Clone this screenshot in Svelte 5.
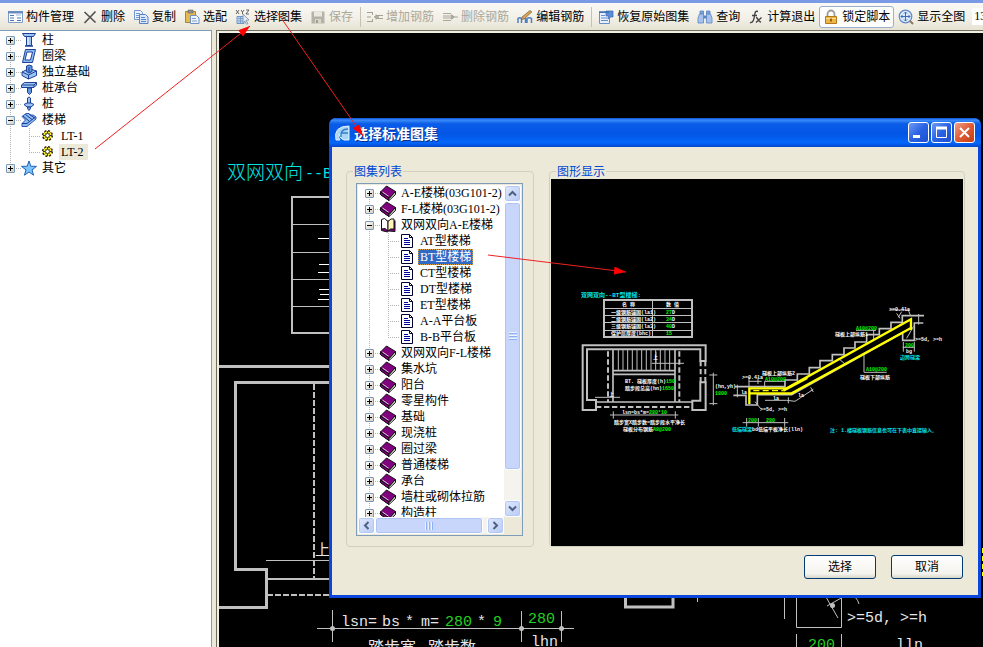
<script>
    const tools = [
        { icon: 'manage', label: '构件管理' },
        { icon: 'cross', label: '删除' },
        { icon: 'copy', label: '复制' },
        { icon: 'paste', label: '选配' },
        { icon: 'pick', label: '选择图集' },
        { icon: 'save', label: '保存', disabled: true },
        { sep: true },
        { icon: 'barAdd', label: '增加钢筋', disabled: true },
        { icon: 'barDel', label: '删除钢筋', disabled: true },
        { icon: 'barEdit', label: '编辑钢筋' },
        { sep: true },
        { icon: 'restore', label: '恢复原始图集' },
        { icon: 'find', label: '查询' },
        { icon: 'fx', label: '计算退出' },
        { icon: 'lock', label: '锁定脚本', pressed: true },
        { icon: 'fit', label: '显示全图' },
    ];

    const parts = [
        { icon: 'column', label: '柱', sign: '+' },
        { icon: 'ring', label: '圈梁', sign: '+' },
        { icon: 'footing', label: '独立基础', sign: '+' },
        { icon: 'cap', label: '桩承台', sign: '+' },
        { icon: 'pile', label: '桩', sign: '+' },
        { icon: 'stair', label: '楼梯', sign: '-' },
        { icon: 'gear', label: 'LT-1', child: true },
        { icon: 'gear', label: 'LT-2', child: true, last: true, mark: 'soft' },
        { icon: 'star', label: '其它', sign: '+', end: true },
    ];

    const atlas = [
        { icon: 'book', label: 'A-E楼梯(03G101-2)', sign: '+' },
        { icon: 'book', label: 'F-L楼梯(03G101-2)', sign: '+' },
        { icon: 'open', label: '双网双向A-E楼梯', sign: '-' },
        { icon: 'page', label: 'AT型楼梯', child: true },
        { icon: 'page', label: 'BT型楼梯', child: true, mark: 'strong' },
        { icon: 'page', label: 'CT型楼梯', child: true },
        { icon: 'page', label: 'DT型楼梯', child: true },
        { icon: 'page', label: 'ET型楼梯', child: true },
        { icon: 'page', label: 'A-A平台板', child: true },
        { icon: 'page', label: 'B-B平台板', child: true, last: true },
        ...['双网双向F-L楼梯', '集水坑', '阳台', '零星构件', '基础', '现浇桩', '圈过梁', '普通楼梯', '承台', '墙柱或砌体拉筋', '构造柱']
            .map((label) => ({ icon: 'book', label, sign: '+' })),
    ];

    const icons = {
        manage: '<path d="M1.500 2.500h14v11h-14z" fill="#fff" stroke="#7e9cc4"/><path d="M1 2h15v2.500H1z" fill="#6a8cc0"/><path d="M3 6.500h4M3 9h4M3 11.500h4M10 9h4M10 11.500h4" stroke="#4f7ab8" stroke-width="1.200"/><path d="M9 6h5" stroke="#9db7d8"/>',
        cross: '<path d="M2.500 3l11 10.500M13.500 2.500L2.500 14" stroke="#555" stroke-width="1.700" fill="none"/>',
        copy: '<path d="M1.500 1.500h6l2 2v7h-8z" fill="#eaf2fd" stroke="#7297cf"/><path d="M3 4.500h4M3 6.500h4M3 8.500h3" stroke="#7297cf"/><path d="M6.500 5.500h6l2.500 2.500v6.500H6.500z" fill="#dbe8fb" stroke="#5b83c4"/><path d="M8 8.500h4M8 10.500h5M8 12.500h5" stroke="#5b83c4"/>',
        paste: '<path d="M1.500 2.500h10v11h-10z" fill="#e6b94e" stroke="#a8853a"/><path d="M4 1h5v3H4z" fill="#8f8f8f" stroke="#666" stroke-width=".6"/><path d="M6.500 6.500h6l2.500 2.500v5.500H6.500z" fill="#eef4fd" stroke="#6f8fc0"/><path d="M8 9.500h4M8 12h5" stroke="#7d9fd0"/>',
        pick: '<path d="M1 1l3 4M4 1L1 5M6 1l1.500 2L9 1M7.500 3v2M11 1h3l-3 4h3" stroke="#555" stroke-width=".9" fill="none"/><path d="M2 7.500h7v7H2z" fill="#bdd4f0" stroke="#6f94c4"/><path d="M3 9.500h5M3 12h5M5.500 8v6" stroke="#6f94c4" stroke-width=".8"/><path d="M8 5l6 6-3 .3 2 3.200-1.500.8-1.800-3.300L8 14z" fill="#dfe8f5" stroke="#7b8fa8" stroke-width=".8"/>',
        save: '<path d="M1.500 2.500h13v12h-13z" fill="#b5b3a8"/><path d="M4 2.500h8v5H4z" fill="#ebe9df"/><path d="M5 10h6v4.500H5z" fill="#d8d6cb"/><path d="M6 11h2v3H6z" fill="#a19f94"/>',
        barAdd: '<path d="M0 3.500h5.500M0 12.500h5.500M5.500 3v3M5.500 10v3M0 8h4M9 6.500h7M9 9.500h7" stroke="#a3a194" fill="none"/><path d="M7 8h5" stroke="#a3a194" stroke-width="1.500"/><path d="M9 5.500v5" stroke="#a3a194"/>',
        barDel: '<path d="M1 4.500h8M1 11.500h8M1 7h10M1 9h10M11 8h5" stroke="#aaa89b" fill="none"/><path d="M9 5v6l4-3z" fill="#aaa89b"/>',
        barEdit: '<path d="M1 14V9.500q1.500-1.500 3.500 0V14M4.500 10q2-2 4 0v4M10 14V9.500q2-1.500 4.500 0V14" fill="none" stroke="#4e7fc6" stroke-width="1.500"/><path d="M5 8l8-6.500 1.800 1.500L7 10l-2.500.5z" fill="#d9a35b" stroke="#7c5b2c" stroke-width=".7"/>',
        restore: '<path d="M1.500 3.500h10v11h-10z" fill="#e6effb" stroke="#668fc8"/><path d="M3 6.500h4M3 9h7M3 11.500h7" stroke="#668fc8"/><path d="M8 2h7v6h-2.500l-2 2V7H8z" fill="#5c8cd6" stroke="#3d6ab0" stroke-width=".7"/><path d="M1 3h10" stroke="#3d6ab0" stroke-width="1.500"/>',
        find: '<path d="M3 2h3.500v3H3zM9.500 2H13v3H9.500z" fill="#7ea3dc" stroke="#5c84c4" stroke-width=".8"/><path d="M2.500 5h4v9H1V9zM9.500 5h4L15 9v5H9.500z" fill="#a7c3ec" stroke="#5c84c4" stroke-width=".8"/><path d="M6.500 6.500h3v3h-3z" fill="#5c84c4"/>',
        fx: '<path d="M10 2.500C7 1.500 7 4 6.500 7S5 14.500 2 13.500M4 6.500h5M8 8.500c2 0 2.500 5 5 4.500M13.500 8.500l-5.500 5" fill="none" stroke="#444" stroke-width="1.400"/>',
        lock: '<path d="M4.500 8V5a3.500 3.500 0 017 0v3" fill="none" stroke="#9c9c9c" stroke-width="1.800"/><path d="M2.500 7.500h11v7h-11z" fill="#efb545" stroke="#b17a1c"/><path d="M3 9.500h10" stroke="#fbe09a"/><path d="M7.200 9.500h1.600v3H7.200z" fill="#7c5210"/>',
        fit: '<circle cx="7.500" cy="7.500" r="6.300" fill="#dce9fb" stroke="#6288c4" stroke-width="1.200"/><path d="M12 12l3 3" stroke="#8c7a58" stroke-width="2"/><path d="M7.500 3v9M3 7.500h9M6 4.500l1.500-1.500L9 4.500M6 10.500L7.500 12 9 10.500M4.500 6L3 7.500 4.500 9M10.500 6L12 7.500 10.500 9" fill="none" stroke="#3c6cb8"/>',
        column: '<path d="M1.500 1.500h13l-2 3h-9z" fill="#9cc4f4" stroke="#1c3f94"/><path d="M5.500 4.500h5v9h-5z" fill="#cfe3fb" stroke="#1c3f94"/><path d="M4 14h8" stroke="#1c3f94" stroke-width="1.500"/><path d="M9 5v8" stroke="#6aa0e4"/>',
        ring: '<path d="M4.500 1.500h10l-3 13H1.500z" fill="#8ebcf2" stroke="#1c3f94"/><path d="M6 4h5.500l-2 8H4z" fill="#fff" stroke="#1c3f94"/>',
        footing: '<path d="M1 8l7-3.500L15.500 7v4.500L7.500 15 1 11.500z" fill="#9cc4f4" stroke="#1c3f94"/><path d="M1 8l6.500 3L15.500 7M7.500 11v4" fill="none" stroke="#1c3f94"/><path d="M5.500 2l2.500-1 3 1v5.500L8 9 5.500 7.500z" fill="#5f98e0" stroke="#1c3f94"/><path d="M8 3v5" stroke="#1c3f94"/>',
        cap: '<path d="M.5 5l3-2.500h12V5L13 7.500H.5z" fill="#9cc4f4" stroke="#1c3f94"/><path d="M1 5h12l2-2M13 5v2" fill="none" stroke="#1c3f94"/><path d="M6.500 8h4v4.500l-2 2-2-2z" fill="#5f98e0" stroke="#1c3f94"/>',
        pile: '<path d="M6.500 2l1.500-1 1.500 1v5.500h-3z" fill="#9cc4f4" stroke="#1c3f94"/><path d="M3 8.500l3-1.500h4l3 1.500-3 2.500H6z" fill="#9cc4f4" stroke="#1c3f94"/><path d="M6.500 11h3v1.500L8 14.500l-1.500-2z" fill="#5f98e0" stroke="#1c3f94"/>',
        stair: '<path d="M1 4.500L5 1.500h3l1.500 1.500H12l3 2v2L6 14.500H1v-3L4.500 8z" fill="#8ebcf2" stroke="#2a55b0"/><path d="M2 4l6.500 5.500M4.500 2.500l6.500 5M8 2l5.500 4M1 11.500h5L14.500 5" fill="none" stroke="#1c3f94"/>',
        gear: '<circle cx="7.500" cy="7.500" r="4.800" fill="#ffee22" stroke="#222" stroke-width="1.500" stroke-dasharray="2 1.770"/><circle cx="7.500" cy="7.500" r="2" fill="#fff" stroke="#333"/><path d="M7.500 3v2M7.500 10v2M3 7.500h2M10 7.500h2M4.500 4.500l1 1M10.500 4.500l-1 1M4.500 10.500l1-1M10.500 10.500l-1-1" stroke="#333"/>',
        star: '<path d="M8 1l1.800 5.200 5.700.2-4.500 3.500 1.600 5.300L8 12l-4.600 3.200L5 9.900.5 6.400l5.700-.2z" fill="#7cc4fb" stroke="#1f62b8"/>',
        book: '<path d="M.5 7v2.500L9 15.500l6.500-6V6.500L9.500 13z" fill="#fff" stroke="#111"/><path d="M.5 7L6.500 1l9 5.500-6 6.500z" fill="#800080" stroke="#111"/><path d="M.5 7L9 13v2.500L.5 9.500z" fill="#800080" stroke="#111"/><path d="M2.500 7l6 4.200" stroke="#f4c8f4"/><path d="M10.500 13.500l4.500-4.500" stroke="#bbb"/>',
        open: '<path d="M1.500 3.500v10l6 1.500 1-1 6.500.500v-11" fill="#800080" stroke="#111"/><path d="M1.500 2.500l3-1 3.500 3v9.500L5 11.500l-3.500.500z" fill="#fff" stroke="#111"/><path d="M8 4.500L11 2h3v10h-3.500L8 14z" fill="#fff8b8" stroke="#111"/>',
        page: '<path d="M2.500 1.500h8l3 3v10h-11z" fill="#fff" stroke="#000030"/><path d="M10.500 1.500v3h3" fill="none" stroke="#000030"/><path d="M5 5.500h4M5 7.500h6M5 9.500h6M5 11.500h6" stroke="#0000a0"/>',
    };

    // dimension nodes along the main drawing: x, y
    const nodes = [[332, 628], [521, 628], [561, 628], [832, 605]];

    const treads = Array.from({ length: 12 }, (_, i) => 205 + i * 14);

    const tableRows = [
        { y: 314, name: '一级钢筋锚固(la1)', value: '27', unit: 'D' },
        { y: 321, name: '二级钢筋锚固(la2)', value: '34', unit: 'D' },
        { y: 328, name: '三级钢筋锚固(la3)', value: '40', unit: 'D' },
        { y: 335, name: '保护层厚度(bhc)', value: '15', unit: '' },
    ];
</script>

{#snippet icon(name)}
    <svg class="icon" viewBox="0 0 16 16" aria-hidden="true">{@html icons[name]}</svg>
{/snippet}

{#snippet tree(rows, name)}
    <ul class="tree" aria-label={name}>
        {#each rows as row}
            <li class="row" class:child={row.child} class:last={row.last} class:end={row.end}>
                {#if !row.child}
                    <button class="expander" aria-label={row.label}>
                        <svg viewBox="0 0 9 9">
                            <path d={row.sign === '+' ? 'M2 4.500h5M4.500 2v5' : 'M2 4.500h5'} stroke="#000" />
                        </svg>
                    </button>
                {/if}
                {@render icon(row.icon)}
                <span class="label {row.mark ?? ''}">{row.label}</span>
            </li>
        {/each}
    </ul>
{/snippet}

{#snippet chevron(d)}
    <svg class="chevron" viewBox="0 0 9 9"><path {d} fill="none" stroke="#4d6185" stroke-width="2" /></svg>
{/snippet}

<div class="app">
    <header class="toolbar">
        {#each tools as tool}
            {#if tool.sep}
                <span class="sep"></span>
            {:else}
                <button class="tool" class:pressed={tool.pressed} disabled={tool.disabled}>
                    {@render icon(tool.icon)}
                    {tool.label}
                </button>
            {/if}
        {/each}
        <input class="zoom" value="13" aria-label="显示全图" />
    </header>

    <div class="workspace">
        <nav class="sidebar">
            {@render tree(parts, '构件管理')}
        </nav>
        <main class="canvas">
            <svg class="drawing" viewBox="219 33 764 614" preserveAspectRatio="xMinYMin slice">
                <text class="big cyan" x="227" y="179">双网双向</text>
                <text class="cad cyan" x="305" y="178">--BT</text>

                <g fill="none" stroke="#c0c0c0">
                    <path d="M340 197H292V333H340" stroke-width="2" />
                    <path d="M292 224.500H340M292 252.500H340M292 279.500H340M292 306.500H340" />
                    <path d="M318 238.500h12M319 264.500h12M318 272.500h12M319 289.500h12M320 294.500h12M318 299.500h12" stroke="#fff" />
                    <path d="M218 366.500H340M340 382.500H235.500V569.500H266.500V607.500H218" stroke-width="3" />
                    <path d="M314 384V579M267 595H340" stroke-width="2" stroke-dasharray="6 2" />
                    <path d="M266 560.500H340" />
                    <path d="M267 579H340" stroke-width="2" />
                    <path d="M317 628.500H574M332.500 610V642M521.500 611V642M561.500 611V642" />
                    <path d="M625.500 597V607H673V597" stroke-width="3" />
                    <path d="M697.500 597v5M784.500 597v22M796.500 597V627.500H841.500V597M796.500 634V650M841.500 634V650" />
                    <path d="M826 597L838 618M827 606l16-9M855 597q3 3 4 7" />
                </g>
                <g fill="#c0c0c0">
                    {#each nodes as [x, y]}
                        <circle cx={x + 0.5} cy={y + 0.5} r="2.500" />
                    {/each}
                </g>
                <path d="M982.500 548v28" stroke="#ff0" stroke-dasharray="5 3" />

                <g class="cad">
                    <text x="315" y="555">上</text>
                    <text x="341" y="626">lsn=</text>
                    <text x="382" y="626">bs</text>
                    <text x="405" y="626">*</text>
                    <text x="421" y="626">m=</text>
                    <text class="green" x="445" y="626">280</text>
                    <text x="477" y="626">*</text>
                    <text class="green" x="493" y="626">9</text>
                    <text class="green" x="528" y="623">280</text>
                    <text x="531" y="646">lhn</text>
                    <text class="han" x="368" y="653">踏步宽</text>
                    <text class="han" x="428" y="653">踏步数</text>
                    <text x="847" y="622">&gt;=5d,</text>
                    <text x="900" y="622">&gt;=h</text>
                    <text class="green" x="808" y="649">200</text>
                    <text x="896" y="649">lln</text>
                </g>
            </svg>
        </main>
    </div>

    <section class="dialog" role="dialog" aria-labelledby="dialog-title">
        <div class="titlebar">
            <svg class="logo" viewBox="0 0 16 16" aria-hidden="true">
                <path d="M2 15Q-1 1 15 1V15H10Q6 14 5 9Q4 13 6 15Z" fill="#a9d4f4" stroke="#e2f2fc" />
                <path d="M14 4Q6 4 7 12M8 8h6" fill="none" stroke="#2f7fca" stroke-width="1.500" />
            </svg>
            <h1 id="dialog-title">选择标准图集</h1>
            <button class="win" aria-label="最小化">
                <svg viewBox="0 0 19 19"><path d="M4 13.500h7" stroke="#fff" stroke-width="3" /></svg>
            </button>
            <button class="win" aria-label="最大化">
                <svg viewBox="0 0 19 19"><path d="M4.500 5v9.500h10V5M4 5h11" fill="none" stroke="#fff" /><path d="M4 5h11" stroke="#fff" stroke-width="3" /></svg>
            </button>
            <button class="win close" aria-label="关闭">
                <svg viewBox="0 0 19 19"><path d="M5 5l9 9M14 5l-9 9" stroke="#fff" stroke-width="2" /></svg>
            </button>
        </div>

        <div class="groups">
            <fieldset class="list-group">
                <legend>图集列表</legend>
                <div class="listbox">
                    <div class="viewport">
                        {@render tree(atlas, '图集列表')}
                    </div>
                    <div class="scroll vertical">
                        <button class="arrow" aria-label="向上">{@render chevron('M1 6.500L4.500 3 8 6.500')}</button>
                        <div class="thumb"><span class="grip"></span></div>
                        <div class="track"></div>
                        <button class="arrow" aria-label="向下">{@render chevron('M1 2.500L4.500 6 8 2.500')}</button>
                    </div>
                    <div class="scroll horizontal">
                        <button class="arrow" aria-label="向左">{@render chevron('M6.500 1L3 4.500 6.500 8')}</button>
                        <div class="thumb"><span class="grip"></span></div>
                        <div class="track"></div>
                        <button class="arrow" aria-label="向右">{@render chevron('M2.500 1L6 4.500 2.500 8')}</button>
                    </div>
                </div>
            </fieldset>

            <fieldset class="preview-group">
                <legend>图形显示</legend>
                <svg class="preview" viewBox="551 179 412 367" preserveAspectRatio="xMinYMin slice">
                    <!-- parameter table -->
                    <g fill="none" stroke="#c0c0c0">
                        <path d="M604 300H692V337H604Z" stroke-width="2" />
                        <path d="M604 308.500H692M604 315.500H692M604 322.500H692M604 330.500H692M652.500 300V337" />
                    </g>
                    <g class="tiny">
                        <text class="caption cyan" x="581" y="297">双网双向--BT型楼梯:</text>
                        <text x="622" y="306">名 称</text>
                        <text x="666" y="306">数 值</text>
                        {#each tableRows as row}
                            <text x="611" y={row.y}>{row.name}</text>
                            <text class="green" x="666" y={row.y}>{row.value}<tspan fill="#fff">{row.unit}</tspan></text>
                        {/each}
                    </g>

                    <!-- plan -->
                    <g transform="translate(550 280) scale(.3333)" fill="none" stroke="#c0c0c0" stroke-width="6">
                        <path d="M98 390V196H467V243H451V208H111V360H138V390Z" />
                        <path d="M467 307V390H427V362H451V307Z" />
                        <path d="M138 366H427M189 208V366M375 208V366M189 272H375M189 283H375" stroke-width="5" />
                        <path d="M452 243V307M466 243V307M138 381H427M174 214V366M388 214V366" stroke-dasharray="16 8" />
                        {#each treads as x}
                            <path d="M{x} 210V270" stroke-width="3" />
                        {/each}
                        <path d="M305 250H402M318 215V250M135 352H210M180 405H385M190 394V416M376 394V416M490 278V376M478 285H502M478 371H502" stroke-width="3" />
                    </g>
                    <g class="tiny">
                        <text x="653" y="359">上</text>
                        <text x="609" y="396">上</text>
                        <text x="625" y="383">BT. 梯板厚度(h)<tspan class="green">150</tspan></text>
                        <text x="625" y="390">踏步段总高(hn)<tspan class="green">1650</tspan></text>
                        <text x="622" y="414">lsn=bs*m=<tspan class="green">280*10</tspan></text>
                        <text x="614" y="424">踏步宽X踏步数=踏步段水平净长</text>
                        <text x="623" y="431">梯板分布钢筋<tspan class="green">A8@200</tspan></text>
                        <text x="715" y="388">(hn,yh)</text>
                        <text class="green" x="715" y="395">1800</text>
                    </g>

                    <!-- section -->
                    <g transform="translate(720 290) scale(.3333)" fill="none" stroke="#c0c0c0" stroke-width="5">
                        <path d="M45 290H195V270H232V252H268V233H300V212H337V194H372V174H405V156H440V134H478V116H513V97H547V77H612" />
                        <path d="M40 316H78V345H112V314H215L548 128V151H583V99H610" />
                        <path d="M86 274H125M87 262V290M114 262V282M134 274H195M134 274V295M135 331H200L225 334L280 298M205 322V340M272 292L280 306M52 284V322M68 398H205M80 384V410M115 384V410M194 384V410M105 335L122 356M432 190V247H500M408 121H468M461 121V150M548 172H584M550 156V185M583 156V185M510 60H565L572 78M530 70L540 85M545 65L535 82M596 72V104M560 145L580 110M355 205L375 222" stroke-width="3" />
                        <g stroke="#ff0" stroke-width="7">
                            <path d="M88 342V295H200L573 88V120" />
                            <path d="M88 310H215L573 114" />
                            <path d="M190 302L262 264" />
                        </g>
                        <path d="M100 302H190" stroke="#ff0" stroke-width="4" stroke-dasharray="18 10" />
                    </g>
                    <g class="tiny">
                        <text x="742" y="379">&gt;=0.4la</text>
                        <text x="889" y="311">&gt;=0.4la</text>
                        <text x="762" y="375">梯板上部纵筋2</text>
                        <text class="green" x="765" y="381">A10@200</text>
                        <text x="835" y="336">梯板上部纵筋1</text>
                        <text class="green" x="856" y="330">A10@200</text>
                        <text class="green" x="866" y="371">A10@200</text>
                        <text x="860" y="379">梯板下部纵筋</text>
                        <text x="915" y="341">&gt;=5d, &gt;=h</text>
                        <text class="green" x="905" y="347">200</text>
                        <text x="906" y="353">bg</text>
                        <text class="cyan" x="900" y="359">边跨梯梁</text>
                        <text x="741" y="394">la</text>
                        <text x="773" y="400">la</text>
                        <text x="798" y="397">la</text>
                        <text x="760" y="411">&gt;=5d, &gt;=h</text>
                        <text class="green" x="748" y="422">200</text>
                        <text class="green" x="766" y="422">280</text>
                        <text class="cyan" x="732" y="431">低端梯梁<tspan fill="#fff">bd低端平板净长(lln)</tspan></text>
                        <text class="cyan" x="830" y="432">注: 1.楼梯板钢筋信息也可在下表中直接输入。</text>
                    </g>
                </svg>
            </fieldset>
        </div>

        <div class="actions">
            <button class="push">选择</button>
            <button class="push">取消</button>
        </div>
    </section>

    <!-- walkthrough arrows -->
    <svg class="arrows" viewBox="0 0 983 647" aria-hidden="true">
        <defs>
            <marker id="tip" viewBox="0 0 12 8" refX="12" refY="4" markerWidth="12" markerHeight="8" markerUnits="userSpaceOnUse" orient="auto">
                <path d="M0 0L12 4L0 8Z" fill="#f00" />
            </marker>
        </defs>
        <g stroke="#f02020">
            <path d="M95 149L250 26" marker-end="url(#tip)" />
            <path d="M277 12L363 136" marker-end="url(#tip)" />
            <path d="M488 255L626 272" marker-end="url(#tip)" />
        </g>
    </svg>
</div>

<style>
    :global(body) {
        background: #ece9d8;
        overflow: hidden;
    }

    .app {
        position: relative;
        display: flex;
        flex-direction: column;
        height: 100vh;
        overflow: hidden;
        font: 12px/16px "Liberation Serif", "Noto Sans CJK SC", sans-serif;
        color: #000;
    }

    button,
    input {
        font: inherit;
        color: inherit;
        margin: 0;
        padding: 0;
        box-sizing: border-box;
    }

    .icon {
        width: 16px;
        height: 16px;
        flex: none;
    }

    /* toolbar */
    .toolbar {
        display: flex;
        align-items: center;
        flex: none;
        height: 27px;
        padding-left: 3px;
        border-top: 3px solid #7b9ae6;
        background: linear-gradient(#faf9f5, #f1efe6 60%, #e6e3d4);
    }

    .tool {
        display: flex;
        align-items: center;
        flex: none;
        gap: 3px;
        height: 22px;
        padding: 0 3px;
        border: 1px solid transparent;
        border-radius: 3px;
        background: none;
        white-space: nowrap;
    }

    .tool:disabled {
        color: #aca899;
    }

    .tool.pressed {
        border-color: #9bb0cc;
        background: #fdfdfb;
    }

    .sep {
        flex: none;
        width: 1px;
        height: 20px;
        margin: 0 2px 0 3px;
        background: #c5c2b2;
    }

    .zoom {
        flex: none;
        width: 60px;
        height: 17px;
        margin-left: 3px;
        padding-left: 2px;
        border: 0;
        background: #fff;
    }

    /* workspace */
    .workspace {
        display: flex;
        flex: 1;
        min-height: 0;
    }

    .sidebar {
        flex: none;
        width: 205px;
        padding: 1px 0 0 6px;
        border-top: 1px solid #7f9db9;
        border-right: 1px solid #7f9db9;
        background: #fff;
    }

    .canvas {
        flex: 1;
        min-width: 0;
        margin-left: 4px;
        border-top: 1px solid #716f64;
        border-left: 1px solid #716f64;
        background: #000;
        box-shadow: inset 2px 2px 0 #f1efe2;
        padding: 2px 0 0 2px;
    }

    .drawing {
        display: block;
        width: 100%;
        height: 100%;
    }

    .cad {
        font: 15px "Liberation Mono", "Noto Sans CJK SC", monospace;
        fill: #e6e6e6;
    }

    .han {
        font-size: 16px;
    }

    .big {
        font: 19px "Noto Sans CJK SC", sans-serif;
        font-weight: 300;
    }

    .tiny {
        font: bold 5px "Liberation Mono", "Noto Sans CJK SC", monospace;
        fill: #fff;
    }

    .caption {
        font-size: 6px;
    }

    .cyan {
        fill: #00e6e6;
    }

    .green {
        fill: #20d020;
    }

    .tiny .green {
        fill: #00ff00;
    }

    /* tree */
    .tree {
        margin: 0;
        padding: 0;
        list-style: none;
    }

    .row {
        --dots-v: repeating-linear-gradient(to bottom, #b4b4b4 0 1px, transparent 1px 2px);
        --dots-h: repeating-linear-gradient(to right, #b4b4b4 0 1px, transparent 1px 2px);
        display: flex;
        align-items: center;
        height: 16px;
        white-space: nowrap;
        background: var(--dots-v) 4px 0 / 1px 16px no-repeat, var(--dots-h) 10px 8px / 5px 1px no-repeat;
    }

    .row:first-child {
        background: var(--dots-v) 4px 8px / 1px 8px no-repeat, var(--dots-h) 10px 8px / 5px 1px no-repeat;
    }

    .row.end {
        background: var(--dots-v) 4px 0 / 1px 8px no-repeat, var(--dots-h) 10px 8px / 5px 1px no-repeat;
    }

    .row.child {
        padding-left: 34px;
        background: var(--dots-v) 4px 0 / 1px 16px no-repeat, var(--dots-v) 23px 0 / 1px 16px no-repeat,
            var(--dots-h) 23px 8px / 11px 1px no-repeat;
    }

    .row.child.last {
        background: var(--dots-v) 4px 0 / 1px 16px no-repeat, var(--dots-v) 23px 0 / 1px 8px no-repeat,
            var(--dots-h) 23px 8px / 11px 1px no-repeat;
    }

    .expander {
        flex: none;
        width: 9px;
        height: 9px;
        margin-right: 6px;
        border: 1px solid #7898b5;
        border-radius: 1px;
        background: linear-gradient(135deg, #fff, #d2cec0);
    }

    .expander svg {
        display: block;
        width: 9px;
        height: 9px;
        margin: -1px;
    }

    .label {
        margin-left: 3px;
        padding: 0 2px;
        line-height: 16px;
    }

    .label.soft {
        padding-right: 5px;
        background: #ece9d8;
    }

    .label.strong {
        color: #fff;
        background: #316ac5;
        outline: 1px dotted #d9a04c;
        outline-offset: -1px;
    }

    /* dialog window */
    .dialog {
        position: absolute;
        left: 329px;
        top: 118px;
        width: 652px;
        box-sizing: border-box;
        border: 3px solid #0a46dc;
        border-top: 0;
        border-radius: 7px 7px 0 0;
        background: #ece9d8;
    }

    .titlebar {
        display: flex;
        align-items: center;
        gap: 2px;
        height: 29px;
        margin: 0 -3px;
        padding: 0 6px 0 5px;
        box-sizing: border-box;
        border-radius: 7px 7px 0 0;
        background: linear-gradient(#0a4fd8, #3b8cf8 7%, #0a5ce8 20%, #0356e4 55%, #0467fa 85%, #0348cc);
    }

    .logo {
        width: 16px;
        height: 16px;
    }

    h1 {
        flex: 1;
        margin: 0 0 0 2px;
        font: bold 14px/20px "Noto Sans CJK SC", sans-serif;
        color: #fff;
        text-shadow: 1px 1px 0 #0c2f8c;
    }

    .win {
        width: 21px;
        height: 21px;
        border: 1px solid #fff;
        border-radius: 3px;
        background: linear-gradient(135deg, #6f9bf4, #2a62e4 50%, #1c4fd0);
    }

    .win.close {
        background: linear-gradient(135deg, #f0a088, #e05a34 50%, #c23c14);
    }

    .win svg {
        display: block;
        width: 19px;
        height: 19px;
    }

    .groups {
        display: flex;
        gap: 15px;
        height: 384px;
        padding: 16px 13px 0 14px;
    }

    fieldset {
        min-width: 0;
        margin: 0;
        padding: 0;
        box-sizing: border-box;
        border: 1px solid #d0d0bf;
        border-radius: 4px;
    }

    legend {
        margin-left: 6px;
        padding: 0 1px;
        font-family: "Noto Sans CJK SC", sans-serif;
        line-height: 16px;
        color: #0046d5;
    }

    .list-group {
        flex: none;
        width: 188px;
    }

    .preview-group {
        flex: 1;
    }

    .preview {
        display: block;
        width: calc(100% - 2px);
        height: 367px;
        margin: 0 1px;
        background: #000;
    }

    .listbox {
        display: grid;
        grid-template: 1fr 17px / 1fr 17px;
        height: 353px;
        box-sizing: border-box;
        margin: 4px 10px 0 9px;
        padding: 1px;
        border: 1px solid #7f9db9;
        background: #ece9d8;
    }

    .viewport {
        overflow: hidden;
        min-height: 0;
        padding-left: 7px;
        background: #fff;
    }

    .scroll {
        display: flex;
        min-width: 0;
        min-height: 0;
        background: #f4f3ee;
    }

    .vertical {
        flex-direction: column;
    }

    .arrow {
        display: grid;
        place-items: center;
        flex: none;
        width: 17px;
        height: 17px;
        border: 1px solid #fff;
        border-radius: 3px;
        background: linear-gradient(135deg, #dfe8fe, #b9cbf3);
        box-shadow: inset 0 0 0 1px #b4c8f6;
    }

    .chevron {
        width: 9px;
        height: 9px;
    }

    .thumb {
        display: grid;
        place-items: center;
        border: 1px solid #fff;
        border-radius: 3px;
        background: #c8d6fb;
        box-shadow: inset 0 0 0 1px #b0c4f4;
    }

    .vertical .thumb {
        flex: 9;
    }

    .vertical .track {
        flex: 1;
    }

    .horizontal .thumb {
        flex: 27;
    }

    .horizontal .track {
        flex: 1;
    }

    .grip {
        width: 8px;
        height: 8px;
        background: repeating-linear-gradient(to right, #eef4fe 0 1px, #8cb0f8 1px 2px, transparent 2px 3px);
    }

    .vertical .grip {
        background: repeating-linear-gradient(to bottom, #eef4fe 0 1px, #8cb0f8 1px 2px, transparent 2px 3px);
    }

    .actions {
        display: flex;
        justify-content: flex-end;
        gap: 15px;
        padding: 8px 15px 16px;
    }

    .push {
        width: 72px;
        height: 24px;
        border: 1px solid #003c74;
        border-radius: 3px;
        background: linear-gradient(#fff, #f4f3ee 80%, #d9d5c9);
    }

    .arrows {
        position: absolute;
        left: 0;
        top: 0;
        width: 983px;
        height: 647px;
        pointer-events: none;
    }
</style>
